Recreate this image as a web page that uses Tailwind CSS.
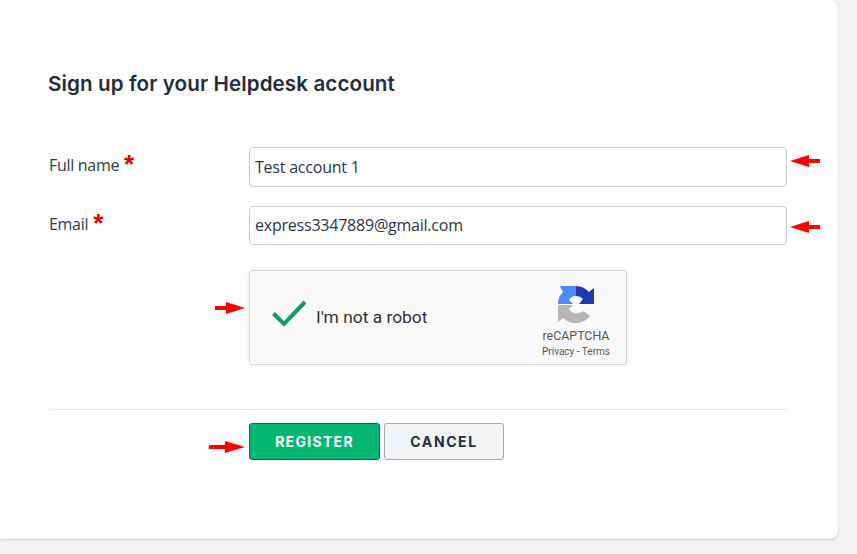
<!doctype html>
<html>
<head>
<meta charset="utf-8">
<script src="https://cdn.jsdelivr.net/npm/@tailwindcss/browser@4"></script>
</head>
<body class="m-0 bg-[#f3f4f6]">
<div class="relative w-[857px] h-[554px] overflow-hidden bg-[#f3f4f6] font-['Noto_Sans',sans-serif]">
  <main class="relative w-[838px] h-[539px] bg-white rounded-br-lg rounded-tr-lg shadow-[0_1px_2px_rgba(100,116,139,0.35)] pl-[49px] pr-[51px] pt-[70px]">
    <h1 class="m-0 -ml-[1px] h-[28px] text-[20.6px] leading-[28px] font-semibold tracking-[0.1px] text-[#1f2d3d] font-['Inter',sans-serif] whitespace-nowrap">Sign up for your Helpdesk account</h1>
    <div class="mt-[49px] flex items-start">
      <label class="w-[200px] h-[40px] pt-[6px] text-[16px] leading-[24px] text-[#2f3b4a] font-['Open_Sans',sans-serif] tracking-[-0.3px] whitespace-nowrap">Full name<span class="ml-[5px] text-[#e00000] text-[26px] leading-[20px] font-bold font-['Liberation_Sans',sans-serif] align-[-2px]">*</span></label>
      <div class="w-[538px] h-[40px] border border-[#c9c9c9] rounded-[4px] px-[5px] flex items-center text-[16px] text-[#2a3645] font-['Open_Sans',sans-serif] tracking-[-0.22px] whitespace-nowrap">Test account 1</div>
    </div>
    <div class="mt-[19px] flex items-start">
      <label class="w-[200px] h-[39px] pt-[6px] text-[16px] leading-[24px] text-[#2f3b4a] font-['Open_Sans',sans-serif] tracking-[-0.3px] whitespace-nowrap">Email<span class="ml-[5px] text-[#e00000] text-[26px] leading-[20px] font-bold font-['Liberation_Sans',sans-serif] align-[-2px]">*</span></label>
      <div class="w-[538px] h-[39px] pb-[1px] border border-[#c9c9c9] rounded-[4px] px-[5px] flex items-center text-[16px] text-[#2a3645] font-['Open_Sans',sans-serif] tracking-[-0.22px] whitespace-nowrap">express3347889@gmail.com</div>
    </div>
    <div class="mt-[25px] ml-[200px] w-[378px] h-[95px] relative flex items-start bg-[#f9f9f9] border border-[#d3d3d3] rounded-[3px] shadow-[0_0_4px_rgba(0,0,0,0.08)]">
      <svg class="ml-[21px] mt-[27px] w-[37px] h-[30px] shrink-0" viewBox="0 0 37 30" fill="none"><path d="M2.5 15.5 L13 26 L34 4" stroke="#0f9d63" stroke-width="4"/></svg>
      <span class="ml-[8px] mt-[33px] text-[17.4px] leading-[26px] text-[#333] font-['Roboto',sans-serif] whitespace-nowrap">I'm not a robot</span>
      <div class="ml-auto mr-[16px] w-[68px] pt-[14px] flex flex-col items-center font-['Roboto',sans-serif] text-[#555]">
        <svg class="w-[38px] h-[38px]" viewBox="0 0 38 38">
          <path d="M1 19 A17 17 0 0 1 6 7 L3 1 L19 1 L19 11 A8 8 0 0 0 12 15 L16 19 Z" fill="#4a8af4"/>
          <path d="M19 1 A18 18 0 0 1 32 7 L37 3 L37 19 L22 19 L26 14 A9 9 0 0 0 19 11 Z" fill="#1c3aa9"/>
          <path d="M1 20 L16 20 L12 24 A9 9 0 0 0 26 26 L33 31 A18 18 0 0 1 6 33 L1 37 Z" fill="#b7b7b7"/>
        </svg>
        <span class="mt-[6px] text-[12.4px] leading-[14px] whitespace-nowrap">reCAPTCHA</span>
        <span class="mt-[3px] text-[10px] leading-[12px] whitespace-nowrap">Privacy - Terms</span>
      </div>
    </div>
    <hr class="mt-[44px] mb-0 border-0 border-t border-[#e6e7e9] w-[738px]">
    <div class="mt-[13px] ml-[200px] flex gap-[4px]">
      <button class="w-[131px] h-[37px] bg-[#03b673] border border-[#0a6b48] rounded-[3px] text-white text-[14px] font-bold tracking-[1.3px] font-['Inter',sans-serif]">REGISTER</button>
      <button class="w-[120px] h-[37px] bg-[#f3f4f6] border border-[#a0aab8] rounded-[3px] text-[#1f2d3d] text-[14px] font-bold tracking-[1.6px] font-['Inter',sans-serif]">CANCEL</button>
    </div>
  </main>
  <svg class="absolute left-[790px] top-[154px] w-[31px] h-[14px]" viewBox="0 0 31 14"><path d="M0 7 L19 1 L19 5 L30 5 L30 9 L19 9 L19 13 Z" fill="#ff0000"/></svg>
  <svg class="absolute left-[790px] top-[220px] w-[31px] h-[14px]" viewBox="0 0 31 14"><path d="M0 7 L19 1 L19 5 L30 5 L30 9 L19 9 L19 13 Z" fill="#ff0000"/></svg>
  <svg class="absolute left-[214px] top-[301px] w-[31px] h-[14px]" viewBox="0 0 31 14"><path d="M31 7 L12 1 L12 5 L1 5 L1 9 L12 9 L12 13 Z" fill="#ff0000"/></svg>
  <svg class="absolute left-[208px] top-[440px] w-[37px] h-[14px]" viewBox="0 0 37 14"><path d="M37 7 L17 1 L17 5 L1 5 L1 9 L17 9 L17 13 Z" fill="#ff0000"/></svg>
</div>
</body>
</html>
